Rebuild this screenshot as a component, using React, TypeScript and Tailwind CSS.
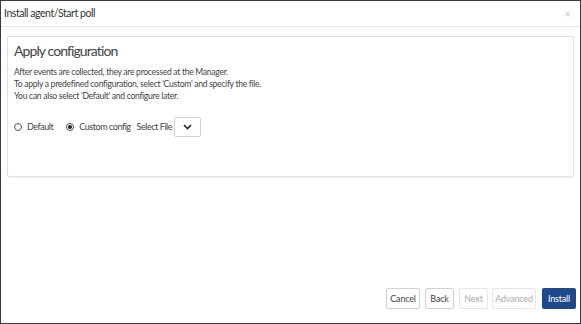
import React from "react";

export default function App() {
  const font = { fontFamily: 'Lato, "Open Sans", sans-serif' };
  return (
    <div className="w-[581px] h-[324px] bg-white border border-[#3a3a3a] flex flex-col text-[#333]" style={font}>
      <div className="h-[26px] shrink-0 flex items-center justify-between pl-[3px] pr-[9px] border-b border-[#e6e6e6]">
        <span className="text-[10.5px] tracking-[-0.45px] text-[#333]">Install agent/Start poll</span>
        <span className="text-[11px] text-[#c8c8c8] leading-none">×</span>
      </div>
      <div className="flex-1 flex flex-col px-[6px] pt-[9px]">
        <div className="h-[141px] border border-[#e2e2e2] rounded-[2px] shadow-[0_1px_2px_rgba(0,0,0,0.08)] px-[6px] pt-[4px]">
          <div className="text-[14px] tracking-[-0.9px] text-[#444] leading-[20px]">Apply configuration</div>
          <div className="mt-[5px] text-[8.6px] tracking-[-0.3px] leading-[12px] text-[#444]">
            <div>After events are collected, they are processed at the Manager.</div>
            <div>To apply a predefined configuration, select 'Custom' and specify the file.</div>
            <div>You can also select 'Default' and configure later.</div>
          </div>
          <div className="mt-[15px] flex items-center text-[9px] tracking-[-0.45px] text-[#444]">
            <span className="w-[8px] h-[8px] rounded-full border border-[#555]" />
            <span className="ml-[5px]">Default</span>
            <span className="ml-[13px] w-[8px] h-[8px] rounded-full border border-[#555] flex items-center justify-center">
              <span className="w-[4px] h-[4px] rounded-full bg-[#222]" />
            </span>
            <span className="ml-[5px]">Custom config</span>
            <span className="ml-[6px]">Select File</span>
            <span className="ml-[2px] w-[27px] h-[20px] border border-[#d0d0d0] rounded-[2px] flex items-center justify-center">
              <svg width="9" height="6" viewBox="0 0 9 6"><path d="M1 1l3.5 3.5L8 1" fill="none" stroke="#222" strokeWidth="1.6" /></svg>
            </span>
          </div>
        </div>
        <div className="flex-1" />
        <div className="flex justify-end pb-[14px] mr-[-2px] text-[9px] tracking-[-0.2px]">
          <div className="w-[34px] h-[21px] border border-[#d2d2d2] rounded-[2px] flex items-center justify-center text-[#444]">Cancel</div>
          <div className="ml-[5px] w-[29px] h-[21px] border border-[#d2d2d2] rounded-[2px] flex items-center justify-center text-[#444]">Back</div>
          <div className="ml-[5px] w-[29px] h-[21px] border border-[#e6e6e6] rounded-[2px] flex items-center justify-center text-[#aaa]">Next</div>
          <div className="ml-[4px] w-[44px] h-[21px] border border-[#e6e6e6] rounded-[2px] flex items-center justify-center text-[#aaa]">Advanced</div>
          <div className="ml-[6px] w-[34px] h-[21px] bg-[#1e4a8c] rounded-[2px] flex items-center justify-center text-white">Install</div>
        </div>
      </div>
    </div>
  );
}
